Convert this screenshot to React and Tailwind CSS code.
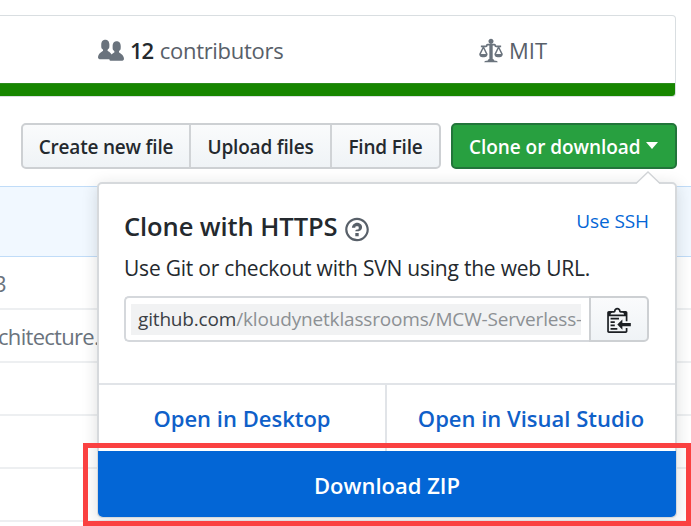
const paths = {
  people:
    "M16 12.999c0 .439-.45 1-1 1H7.995c-.539 0-.994-.447-.995-.999H1c-.54 0-1-.561-1-1 0-2.634 3-4 3-4s.229-.409 0-1c-.841-.621-1.058-.59-1-3 .058-2.419 1.367-3 2.5-3s2.442.58 2.5 3c.058 2.41-.159 2.379-1 3-.229.59 0 1 0 1s1.549.711 2.42 2.088C9.196 9.369 10 8.999 10 8.999s.229-.409 0-1c-.841-.62-1.058-.59-1-3 .058-2.419 1.367-3 2.5-3s2.437.581 2.495 3c.059 2.41-.158 2.38-1 3-.229.59 0 1 0 1s3.005 1.366 3.005 4",
  law: "M7 4c-.83 0-1.5-.67-1.5-1.5S6.17 1 7 1s1.5.67 1.5 1.5S7.83 4 7 4zm7 6c0 1.11-.89 2-2 2h-1c-1.11 0-2-.89-2-2l2-4h-1c-.55 0-1-.45-1-1H8v8c.42 0 1 .45 1 1h1c.42 0 1 .45 1 1H3c0-.55.58-1 1-1h1c0-.55.58-1 1-1h.03L6 5H5c0 .55-.45 1-1 1H3l2 4c0 1.11-.89 2-2 2H2c-1.11 0-2-.89-2-2l2-4H1V5h3c0-.55.45-1 1-1h4c.55 0 1 .45 1 1h3v1h-1l2 4zM2.5 7L1 10h3L2.5 7zM13 10l-1.5-3-1.5 3h3z",
  question:
    "M6 10h2v2H6v-2zm4-3.5C10 8.64 8 9 8 9H6c0-.55.45-1 1-1h.5c.28 0 .5-.22.5-.5v-1c0-.28-.22-.5-.5-.5h-1c-.28 0-.5.22-.5.5V7H4c0-1.5 1.5-3 3-3s3 1 3 2.5zM7 2.3c3.14 0 5.7 2.56 5.7 5.7s-2.56 5.7-5.7 5.7A5.71 5.71 0 0 1 1.3 8c0-3.14 2.56-5.7 5.7-5.7zM7 1C3.14 1 0 4.14 0 8s3.14 7 7 7 7-3.14 7-7-3.14-7-7-7z",
  clippy:
    "M2 13h4v1H2v-1zm5-6H2v1h5V7zm2 3V8l-3 3 3 3v-2h5v-2H9zM4.5 9H2v1h2.5V9zM2 12h2.5v-1H2v1zm9 1h1v2c-.02.28-.11.52-.3.7-.19.18-.42.28-.7.3H1c-.55 0-1-.45-1-1V4c0-.55.45-1 1-1h3c0-1.11.89-2 2-2 1.11 0 2 .89 2 2h3c.55 0 1 .45 1 1v5h-1V6H1v9h10v-2zM2 5h8c0-.55-.45-1-1-1H8c-.55 0-1-.45-1-1s-.45-1-1-1-1 .45-1 1-.45 1-1 1H3c-.55 0-1 .45-1 1z",
};

function Icon({ name, width = 14, className }) {
  return (
    <svg viewBox={`0 0 ${width} 16`} className={`shrink-0 ${className}`} fill="currentColor" fillRule="evenodd" aria-hidden="true">
      <path d={paths[name]} />
    </svg>
  );
}

function StatsBar() {
  return (
    <section className="mt-[15px] mr-[15px] h-[82px] overflow-hidden rounded-r-[4px] border border-l-0 border-[#d9dee1] bg-white">
      <div className="flex h-[67px] items-center text-[22px] text-[#586069]">
        <div className="flex w-[381px] shrink-0 items-center pl-[98px]">
          <Icon name="people" width={16} className="mt-[2px] h-[26px] w-[26px] text-[#6a737d]" />
          <span className="mt-px ml-[6px] flex gap-[7px] tracking-[-0.3px]">
            <b className="font-[550] tracking-[-1.2px] text-[#24292e]">12</b>
            <span>contributors</span>
          </span>
        </div>
        <div className="flex items-center pl-[98px]">
          <Icon name="law" className="mt-[2px] h-[27px] w-[24px] text-[#6a737d]" />
          <span className="mt-px ml-[6px]">MIT</span>
        </div>
      </div>
      <div className="h-[14px] border-y border-[#2c8c1d] bg-[#178600]" />
    </section>
  );
}

function Toolbar() {
  const plain = "flex h-full items-center justify-center border-[#d0d3d6] pt-[2px]";
  return (
    <div className="mt-[26px] flex h-[46px] pl-[21px] text-[19px] font-[550] text-[#24292e]">
      <div className="flex w-[420px] overflow-hidden rounded-[5px] border-2 border-[#cdd0d3] bg-linear-to-b from-[#fafbfc] to-[#eff3f6] tracking-[-0.2px]">
        <button className={`${plain} w-[168px] border-r-2`}>Create new file</button>
        <button className={`${plain} w-[141px] border-r-2`}>Upload files</button>
        <button className={`${plain} flex-1`}>Find File</button>
      </div>
      <button className="ml-[10px] flex w-[226px] items-center rounded-[5px] border-2 border-[#22753a] bg-[#28a040] pl-[16px] tracking-[-0.05px] text-white">
        <span className="w-[177px] pt-[2px] text-left">Clone or download</span>
        <svg viewBox="0 0 12 7" className="-mt-[2px] h-[7px] w-[12px] shrink-0" fill="currentColor"><path d="M0 0h12L6 7z" /></svg>
      </button>
    </div>
  );
}

function FileList() {
  const row = "h-[53px] border-b-2 border-[#edeff1] flex items-center text-[22px] tracking-[-0.8px]";
  return (
    <div className="mt-[17px] text-[#6a737d]">
      <div className="h-[71px] border-y border-[#c0dcf8] bg-[#f1f8ff]" />
      <div className={`${row}`}><span className="mt-[2px] -ml-[6px]">3</span></div>
      <div className={`${row}`}><span className="mt-[2px] -ml-[2px] tracking-[-0.7px]">chitecture.</span></div>
      <div className={row} />
      <div className={row} />
      <div className={row} />
    </div>
  );
}

function ClonePopover() {
  return (
    <div className="absolute top-[182px] left-[97px] flex h-[336px] w-[580px] flex-col rounded-[5px] border-2 border-[#d6d9dc] bg-white text-[#24292e] shadow-[0_3px_16px_rgba(27,31,35,0.15)]">
      <svg viewBox="0 0 26 14" className="absolute -top-[13px] right-[14px] h-[14px] w-[26px]">
        <path d="M1 13 13 1l12 12v1H1z" fill="white" />
        <path d="M1 12.500 13 1l12 11.500" fill="none" stroke="#d0d3d6" strokeWidth="1.300" />
      </svg>
      <div className="h-[199px] px-[25px]">
        <div className="flex h-[83px] items-start justify-between pt-[24px]">
          <h1 className="flex items-center text-[25.500px] leading-[36px] font-[550] tracking-[-0.08px]">
            Clone with HTTPS
            <Icon name="question" className="mt-[6px] ml-[7px] h-[27px] w-[24px] text-[#586069]" />
          </h1>
          <a className="pr-px text-[19px] leading-[26px] tracking-[-0.1px] text-[#0366d6]">Use SSH</a>
        </div>
        <p className="-mt-[12px] h-[41px] text-[21px] leading-[27px] tracking-[-0.22px] whitespace-nowrap">
          Use Git or checkout with SVN using the web URL.
        </p>
        <div className="flex h-[46px] w-[525px]">
          <div className="flex w-[465px] items-center overflow-hidden rounded-l-[5px] border-2 border-r-0 border-[#d5d8dc] px-[5px]">
            <div className="flex h-[31px] w-[450px] items-center overflow-hidden bg-[#f1f2f3] pl-[7px] text-[19px] tracking-[-0.17px] whitespace-nowrap text-[#8c9094]">
              <span className="text-[#3b4045]">github.com</span>/kloudynetklassrooms/MCW-Serverless-
            </div>
          </div>
          <button className="flex w-[60px] items-center justify-center rounded-r-[5px] border-2 border-[#cdd0d3] bg-linear-to-b from-[#fafbfc] to-[#eff3f6]">
            <Icon name="clippy" className="h-[27px] w-[24px] text-[#1b1f23]" />
          </button>
        </div>
      </div>
      <div className="flex h-[68px] border-t-2 border-[#e1e4e8] text-[22px] font-[550] text-[#0f60c9]">
        <a className="flex w-[288px] items-center justify-center border-r-2 border-[#e1e4e8]">Open in Desktop</a>
        <a className="flex flex-1 items-center justify-center">Open in Visual Studio</a>
      </div>
      <button className="-mx-px -mb-px flex h-[66px] items-center justify-center rounded-b-[5px] bg-[#0366d6] pt-[2px] text-[22px] font-semibold text-white">
        Download ZIP
      </button>
    </div>
  );
}

export default function App() {
  return (
    <main className="relative flow-root h-[526px] w-[691px] overflow-hidden bg-white font-['Open_Sans','Noto_Sans',sans-serif]">
      <StatsBar />
      <Toolbar />
      <FileList />
      <ClonePopover />
      <div className="absolute top-[443px] left-[83px] h-[83px] w-[608px] border-[5px] border-[#fa4141]" />
    </main>
  );
}
